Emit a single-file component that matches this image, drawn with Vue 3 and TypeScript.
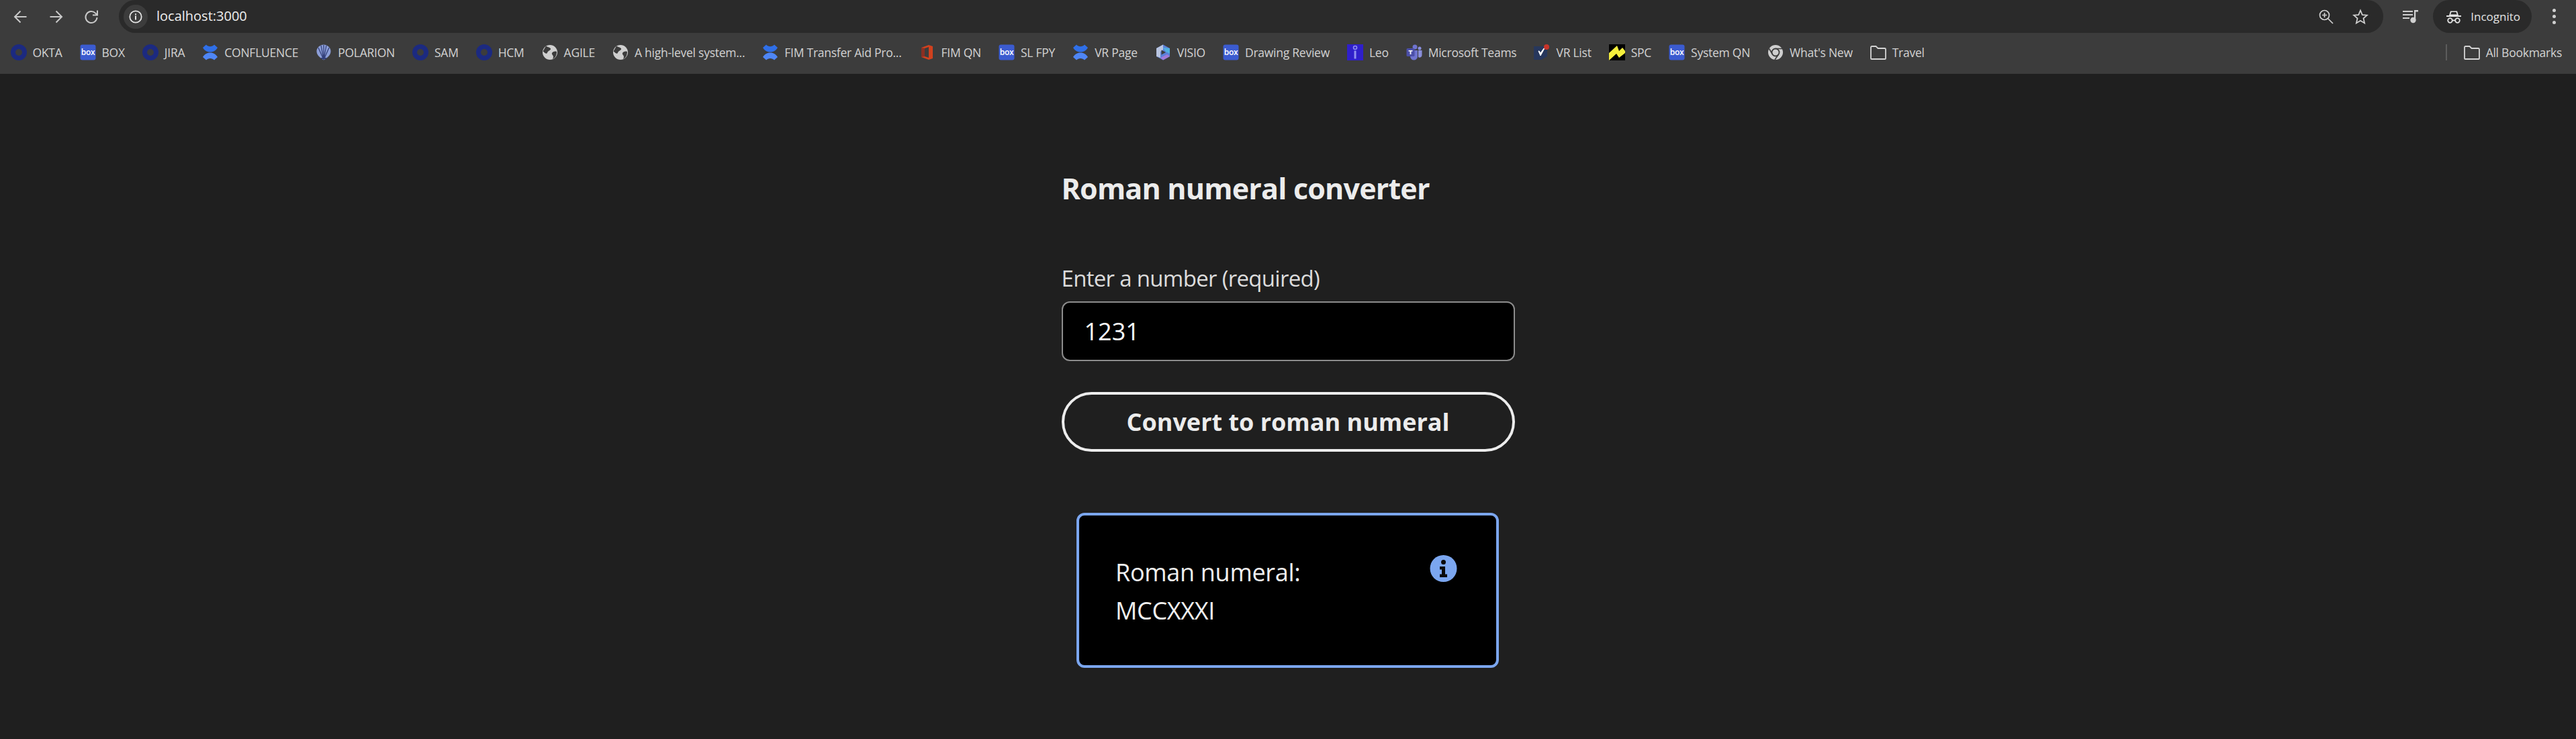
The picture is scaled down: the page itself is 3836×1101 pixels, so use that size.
<script setup lang="ts">
import { ref, computed } from 'vue'

// 书签栏数据
type Bookmark = { label: string; icon: string }

const bookmarks: Bookmark[] = [
  { label: 'OKTA', icon: 'okta' },
  { label: 'BOX', icon: 'box' },
  { label: 'JIRA', icon: 'okta' },
  { label: 'CONFLUENCE', icon: 'confluence' },
  { label: 'POLARION', icon: 'polarion' },
  { label: 'SAM', icon: 'okta' },
  { label: 'HCM', icon: 'okta' },
  { label: 'AGILE', icon: 'globe' },
  { label: 'A high-level system...', icon: 'globe' },
  { label: 'FIM Transfer Aid Pro...', icon: 'confluence' },
  { label: 'FIM QN', icon: 'office' },
  { label: 'SL FPY', icon: 'box' },
  { label: 'VR Page', icon: 'confluence' },
  { label: 'VISIO', icon: 'copilot' },
  { label: 'Drawing Review', icon: 'box' },
  { label: 'Leo', icon: 'leo' },
  { label: 'Microsoft Teams', icon: 'teams' },
  { label: 'VR List', icon: 'vr' },
  { label: 'SPC', icon: 'spc' },
  { label: 'System QN', icon: 'box' },
  { label: "What's New", icon: 'chrome' },
  { label: 'Travel', icon: 'folder' },
]

const value = ref('1231')

function toRoman(n: number) {
  const table: [number, string][] = [
    [1000, 'M'], [900, 'CM'], [500, 'D'], [400, 'CD'], [100, 'C'], [90, 'XC'],
    [50, 'L'], [40, 'XL'], [10, 'X'], [9, 'IX'], [5, 'V'], [4, 'IV'], [1, 'I'],
  ]
  let out = ''
  for (const [v, s] of table) {
    while (n >= v) {
      out += s
      n -= v
    }
  }
  return out
}

const result = ref(toRoman(Number(value.value)))
const hasResult = computed(() => result.value.length > 0)

function convert() {
  result.value = toRoman(Number(value.value))
}
</script>

<template>
  <div class="window">
    <header class="toolbar">
      <div class="nav">
        <svg class="nav-icon" viewBox="0 0 24 24"><path d="M21 12H4M12 3.5 3.5 12l8.500 8.500" /></svg>
        <svg class="nav-icon" viewBox="0 0 24 24"><path d="M3 12h17M12 3.500 20.500 12 12 20.500" /></svg>
        <svg class="nav-icon" viewBox="0 0 24 24"><path d="M20 13a8.500 8.500 0 1 1-2.600-6.600L20 9M20.500 2.500V9.500H13.500" /></svg>
      </div>
      <div class="address">
        <span class="site-chip">
          <svg viewBox="0 0 20 20" width="20" height="20">
            <circle cx="10" cy="10" r="8.700" fill="none" stroke="#e3e3e3" stroke-width="1.800" />
            <rect x="9" y="8.500" width="2" height="6" fill="#e3e3e3" />
            <rect x="9" y="5.300" width="2" height="2" fill="#e3e3e3" />
          </svg>
        </span>
        <span class="url">localhost:3000</span>
        <div class="address-actions">
          <svg class="zoom-icon" viewBox="0 0 22 22" width="22" height="22" fill="none" stroke="#d0d0d0" stroke-width="1.700">
            <circle cx="8.500" cy="8.500" r="7" />
            <path d="M13.500 13.500 21 21M8.500 5v7M5 8.500h7" />
          </svg>
          <svg viewBox="0 0 24 24" width="24" height="24" fill="none" stroke="#d0d0d0" stroke-width="1.800">
            <path d="M12 2.500l2.800 6.600 7.100.600-5.400 4.700 1.600 7-6.100-3.700-6.100 3.700 1.600-7L2.100 9.700l7.100-.600z" />
          </svg>
        </div>
      </div>
      <svg class="media" viewBox="0 0 24 20" width="24" height="20" fill="#d0d0d0">
        <rect x="0" y="1" width="15" height="2" />
        <rect x="0" y="6" width="15" height="2" />
        <rect x="0" y="11" width="10" height="2" />
        <rect x="17" y="0" width="2.200" height="14" />
        <rect x="17" y="0" width="6" height="2.500" />
        <circle cx="15.500" cy="15" r="4.200" />
      </svg>
      <div class="incognito">
        <svg viewBox="0 0 24 20" width="24" height="20" fill="#e3e3e3">
          <path d="M7 1.500h10l2 6.500H5zM8.500 3l-1.300 3.500h9.600L15.500 3z" fill-rule="evenodd" />
          <rect x="1" y="8" width="22" height="2" />
          <circle cx="6.500" cy="15.500" r="3.300" fill="none" stroke="#e3e3e3" stroke-width="1.800" />
          <circle cx="17.500" cy="15.500" r="3.300" fill="none" stroke="#e3e3e3" stroke-width="1.800" />
          <rect x="9.500" y="14.500" width="5" height="1.800" />
        </svg>
        <span>Incognito</span>
      </div>
      <div class="menu"><i /><i /><i /></div>
    </header>

    <nav class="bookmarks">
      <a v-for="b in bookmarks" :key="b.label" class="bookmark">
        <svg class="fav" viewBox="0 0 24 24">
          <template v-if="b.icon === 'okta'">
            <circle cx="12" cy="12" r="8.500" fill="none" stroke="#1c2a80" stroke-width="7" />
          </template>
          <template v-else-if="b.icon === 'box'">
            <rect x="0.500" y="0.500" width="23" height="23" rx="3" fill="#3b5bd0" />
            <text x="12" y="15.500" text-anchor="middle" class="box-word">box</text>
          </template>
          <template v-else-if="b.icon === 'confluence'">
            <path d="M1 5 6 0.500c3 3.500 9 3.500 12 0L23 5c-3 5-7 6.500-11 6.500S4 10 1 5z" fill="#2f6fe8" />
            <path d="M1 19l5 4.500c3-3.500 9-3.500 12 0l5-4.500c-3-5-7-6.500-11-6.500S4 14 1 19z" fill="#4f86f5" />
          </template>
          <template v-else-if="b.icon === 'polarion'">
            <path d="M12 23.500C8 21 2 17 1.500 11 1 5 7 .5 12 .5S23 5 22.500 11C22 17 16 21 12 23.500z" fill="#8d9fd8" />
            <path d="M12 23 4 5M12 23 8 1.500M12 23V1M12 23l4-21.500M12 23l8-18" stroke="#33407a" stroke-width="1.300" />
            <path d="M8 21h8" stroke="#33407a" stroke-width="2" />
          </template>
          <template v-else-if="b.icon === 'globe'">
            <circle cx="12" cy="12" r="11" fill="#cfcfcf" />
            <path d="M6 2.500c3 2 6 2 7 4s-4 3-5 6-4 0-6.500-2zM22 11c-3-1-6 0-7 2s2 3 2 6l-1 3c4-2 6-6 6-11z" fill="#3c3c3c" />
          </template>
          <template v-else-if="b.icon === 'office'">
            <path d="M3 5 14 1l6 2v18l-6 2-11-4z" fill="#d0411e" />
            <path d="M8 6l6-2v16l-6-2z" fill="#3c3c3c" />
            <path d="M3 5v14l5-1V6z" fill="#8b2f22" />
          </template>
          <template v-else-if="b.icon === 'copilot'">
            <path d="M12 0.500 22 6v12l-10 5.500L2 18V6z" fill="#5a80d8" />
            <path d="M2 6l10-5.500V8l-4 3v9l-6-2z" fill="#b8c4e0" />
            <path d="M8 20l10-5 4 3-10 5.500z" fill="#a07ad8" />
            <path d="M12 5l10 1v8l-6-3z" fill="#4fb0e0" />
            <path d="M9.500 8.500 16 12l-6.500 3.500z" fill="#3c3c3c" />
          </template>
          <template v-else-if="b.icon === 'leo'">
            <rect width="24" height="24" fill="#2f1fcb" />
            <circle cx="12" cy="5" r="2.500" fill="none" stroke="#8f8ff0" stroke-width="1.600" />
            <rect x="10.500" y="9.500" width="3" height="12" fill="#8f8ff0" />
          </template>
          <template v-else-if="b.icon === 'teams'">
            <circle cx="13" cy="4" r="3.500" fill="#6f74d0" />
            <circle cx="20" cy="6" r="2.500" fill="#8a8fdc" />
            <path d="M6 9h11v9a5.500 5.500 0 0 1-11 0z" fill="#6f74d0" />
            <path d="M18 9h5.500v7a3.500 3.500 0 0 1-5.500 3z" fill="#8a8fdc" />
            <rect x="0.500" y="6" width="12" height="12" rx="1.500" fill="#4b4fa8" />
            <path d="M3.500 9h6v1.600H7.400V15H5.600v-4.400H3.500z" fill="#fff" />
          </template>
          <template v-else-if="b.icon === 'vr'">
            <path d="M0 3h20v15l-9 5H0z" fill="#27375c" />
            <path d="M7 10l3 7 6-11-1 0-5 7-2-3z" fill="#fff" stroke="#fff" />
            <circle cx="19" cy="4" r="4" fill="#c8352a" />
          </template>
          <template v-else-if="b.icon === 'spc'">
            <rect width="24" height="24" fill="#000" />
            <path d="M0 13 12 2l3 8 5-5 4 5v3l-9 7-4-6L0 24z" fill="#f5ef3c" />
          </template>
          <template v-else-if="b.icon === 'chrome'">
            <circle cx="12" cy="12" r="11" fill="#cfcfcf" />
            <circle cx="12" cy="12" r="5.500" fill="#cfcfcf" stroke="#3c3c3c" stroke-width="1.800" />
            <path d="M12 6.500h10M7.500 15 2.500 6.500M16.500 15 11 23" stroke="#3c3c3c" stroke-width="1.600" />
          </template>
          <template v-else>
            <path d="M1 21V4.500A1.500 1.500 0 0 1 2.500 3h6l3 3h10A1.500 1.500 0 0 1 23 7.500V21a1 1 0 0 1-1 1H2a1 1 0 0 1-1-1z" fill="none" stroke="#d4d4d4" stroke-width="1.800" />
          </template>
        </svg>
        <span>{{ b.label }}</span>
      </a>
      <div class="bookmarks-end">
        <span class="divider" />
        <a class="bookmark">
          <svg class="fav" viewBox="0 0 24 24">
            <path d="M1 21V4.500A1.500 1.500 0 0 1 2.500 3h6l3 3h10A1.500 1.500 0 0 1 23 7.500V21a1 1 0 0 1-1 1H2a1 1 0 0 1-1-1z" fill="none" stroke="#d4d4d4" stroke-width="1.800" />
          </svg>
          <span>All Bookmarks</span>
        </a>
      </div>
    </nav>

    <main class="page">
      <form class="converter" @submit.prevent="convert">
        <h1>Roman numeral converter</h1>
        <label for="number">Enter a number (required)</label>
        <input id="number" v-model="value" type="text" />
        <button type="submit">Convert to roman numeral</button>
        <div v-if="hasResult" class="result">
          <p>Roman numeral:<br />{{ result }}</p>
          <svg class="info" viewBox="0 0 40 40">
            <circle cx="20" cy="20" r="20" fill="#7ba6ef" />
            <circle cx="20" cy="10.500" r="3.500" fill="#0a0a0a" />
            <path d="M14.500 17h8v11.500h3V33h-11v-4.500h3v-7h-3z" fill="#0a0a0a" />
          </svg>
        </div>
      </form>
    </main>
  </div>
</template>

<style scoped>
.window {
  display: flex;
  flex-direction: column;
  min-height: 1101px;
  font-family: "Open Sans", "Noto Sans", sans-serif;
  color: #ececec;
}

.toolbar {
  display: flex;
  align-items: center;
  height: 49px;
  padding-left: 4px;
  background: #3c3c3c;
}

.nav {
  display: flex;
  margin-right: 14px;
}

.nav-icon {
  width: 53px;
  height: 24px;
  fill: none;
  stroke: #c9c9c9;
  stroke-width: 2;
}

.address {
  flex: 1;
  display: flex;
  align-items: center;
  height: 49px;
  padding: 0 22px 0 7px;
  border-radius: 25px;
  background: #2a2a2a;
}

.site-chip {
  display: flex;
  align-items: center;
  justify-content: center;
  width: 36px;
  height: 36px;
  border-radius: 50%;
  background: #3c3c3c;
}

.url {
  margin: 0 0 3px 13px;
  font-size: 20px;
  color: #eeeeee;
}

.address-actions {
  margin-left: auto;
  display: flex;
  align-items: center;
  gap: 28px;
}

.media {
  margin-left: 29px;
}

.incognito {
  display: flex;
  align-items: center;
  gap: 13px;
  height: 49px;
  margin-left: 21px;
  padding: 0 17px 0 19px;
  border-radius: 25px;
  background: #2a2a2a;
  font-size: 17px;
  color: #e3e3e3;
}

.menu {
  display: flex;
  flex-direction: column;
  align-items: center;
  gap: 4px;
  width: 66px;
}

.menu i {
  width: 5px;
  height: 5px;
  border-radius: 50%;
  background: #d0d0d0;
}

.bookmarks {
  box-sizing: border-box;
  display: flex;
  align-items: center;
  height: 61px;
  padding: 0 8px 4px 2.500px;
  background: #3c3c3c;
}

.bookmark {
  display: flex;
  align-items: center;
  gap: 9px;
  padding: 0 13px;
  font-size: 17.500px;
  letter-spacing: -0.25px;
  color: #d2d2d2;
  white-space: nowrap;
}

.fav {
  width: 24px;
  height: 24px;
  flex: none;
}

.box-word {
  font-family: "Open Sans", sans-serif;
  font-size: 12px;
  font-weight: 600;
  letter-spacing: -0.3px;
  fill: #fff;
}

.bookmarks-end {
  margin-left: auto;
  display: flex;
  align-items: center;
}

.divider {
  width: 2px;
  height: 24px;
  margin-right: 12px;
  background: #5c5c5c;
}

.page {
  flex: 1;
  background: #1f1f1f;
}

.converter {
  display: flex;
  flex-direction: column;
  width: 675px;
  margin: 0 auto;
  padding-top: 141px;
}

h1 {
  margin: 0 0 81px;
  font-size: 43px;
  line-height: 60px;
  font-weight: 700;
  letter-spacing: -0.8px;
  color: #ececec;
}

label {
  margin-bottom: 11px;
  font-size: 33px;
  line-height: 46px;
  letter-spacing: -0.7px;
  color: #dcdcdc;
}

input {
  box-sizing: border-box;
  width: 100%;
  height: 89px;
  padding: 0 32px;
  border: 2px solid #8c8c8c;
  border-radius: 12px;
  background: #000;
  color: #fff;
  font: 36px "Open Sans", sans-serif;
  outline: none;
}

button {
  box-sizing: border-box;
  height: 89px;
  margin-top: 46px;
  border: 4px solid #ececec;
  border-radius: 45px;
  background: transparent;
  color: #ececec;
  font: 700 36px "Open Sans", sans-serif;
}

.result {
  box-sizing: border-box;
  display: flex;
  justify-content: space-between;
  align-items: flex-start;
  height: 231px;
  margin: 91px 23.500px 0 22.500px;
  padding: 56px 58px 0 54px;
  border: 4px solid #7ba6ef;
  border-radius: 12px;
  background: #000;
}

.result p {
  margin: 0;
  font-size: 36px;
  line-height: 57px;
  letter-spacing: -0.3px;
  color: #f0f0f0;
}

.info {
  width: 41px;
  height: 40px;
  margin-top: 3px;
  flex: none;
}
</style>

<style>
body {
  background: #1f1f1f;
}
</style>
